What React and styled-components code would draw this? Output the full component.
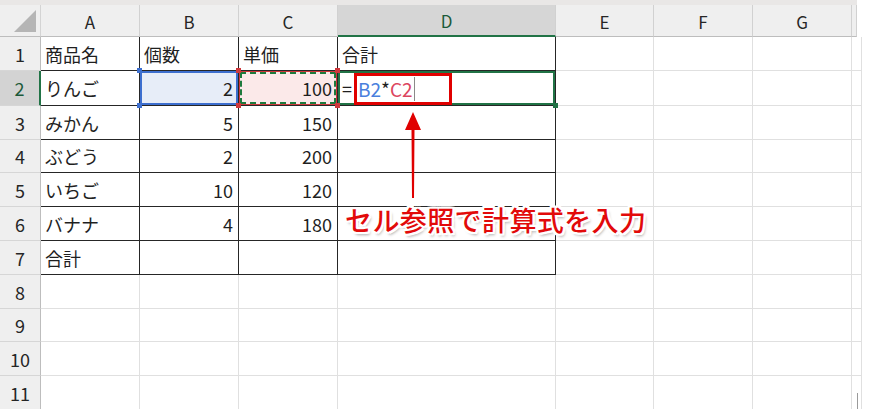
import React from 'react'
import styled, { createGlobalStyle, css } from 'styled-components'

const GlobalStyle = createGlobalStyle`
    html, body {
        margin: 0;
        padding: 0;
        background: #ffffff;
    }
    body {
        font-family: "Noto Sans CJK JP", "Noto Sans", sans-serif;
    }
`

const colWidths = [41, 99, 99, 99, 218, 98, 99, 99, 5]
const rowHeights = [34, 35, 34, 33, 34, 34, 34, 34, 33, 34, 34]
const cols = ['A', 'B', 'C', 'D', 'E', 'F', 'G']

const data = [
    ['商品名', '個数', '単価', '合計'],
    ['りんご', '2', '100', 'formula'],
    ['みかん', '5', '150', ''],
    ['ぶどう', '2', '200', ''],
    ['いちご', '10', '120', ''],
    ['バナナ', '4', '180', ''],
    ['合計', '', '', ''],
]

const Page = styled.div`
    position: relative;
    width: 873px;
    height: 409px;
    overflow: hidden;
`

const Sheet = styled.div`
    display: grid;
    width: 857px;
    grid-template-columns: ${colWidths.map(w => w + 'px').join(' ')};
    grid-template-rows: 5px 32px ${rowHeights.map(h => h + 'px').join(' ')};
    font-size: 18px;
    color: #1f1f1f;
`

const TopStrip = styled.div`
    grid-column: 1 / -1;
    background: #e9e7e6;
`

const Corner = styled.div`
    position: relative;
    background: #efefef;
    border-right: 1px solid #d4d4d4;
    border-bottom: 1px solid #bdbdbd;
    box-sizing: border-box;

    &::after {
        content: '';
        position: absolute;
        right: 4px;
        bottom: 4px;
        width: 0;
        height: 0;
        border-left: 22px solid transparent;
        border-bottom: 22px solid #b5b5b5;
    }
`

const ColHead = styled.div`
    display: flex;
    align-items: center;
    justify-content: center;
    box-sizing: border-box;
    background: ${p => (p.$active ? '#d6d6d6' : '#efefef')};
    color: ${p => (p.$active ? '#1c5a3a' : '#262626')};
    border-right: 1px solid #d1d1d1;
    border-bottom: ${p => (p.$active ? '2px solid #217346' : '1px solid #bdbdbd')};
    font-size: 17px;
    padding-top: 1px;
`

const RowHead = styled.div`
    display: flex;
    align-items: center;
    justify-content: center;
    box-sizing: border-box;
    background: ${p => (p.$active ? '#d3d3d3' : '#efefef')};
    color: ${p => (p.$active ? '#1c5a3a' : '#262626')};
    border-right: ${p => (p.$active ? '2px solid #217346' : '1px solid #bdbdbd')};
    border-bottom: 1px solid #d6d6d6;
    font-size: 18px;
`

const selStyles = {
    blue: css`
        background: #e7edf8;
        box-shadow: inset 0 0 0 2px #3d6fcf;
    `,
    copy: css`
        background: #fbe9e9;
        box-shadow: inset 0 0 0 1px #d0383c;
        &::after {
            content: '';
            position: absolute;
            inset: 1px;
            border: 2px dashed #1d7a3c;
            pointer-events: none;
        }
    `,
    active: css`
        box-shadow: inset 0 0 0 2px #217346;
    `,
}

const Cell = styled.div`
    position: relative;
    display: flex;
    align-items: center;
    justify-content: ${p => (p.$right ? 'flex-end' : 'flex-start')};
    box-sizing: border-box;
    padding: 0 5px 0 4px;
    border-right: 1px solid ${p => (p.$table ? '#262626' : '#e0e0e0')};
    border-bottom: 1px solid ${p => (p.$table ? '#262626' : '#e0e0e0')};
    white-space: nowrap;
    ${p => p.$sel && selStyles[p.$sel]}
`

const Handle = styled.span`
    position: absolute;
    width: 5px;
    height: 5px;
    background: ${p => p.$color};
    ${p => (p.$top ? 'top: -3px;' : 'bottom: -3px;')}
    ${p => (p.$left ? 'left: -3px;' : 'right: -3px;')}
    z-index: 2;
`

const Formula = styled.div`
    display: flex;
    align-items: center;
    margin-left: 0;
`

const Eq = styled.span`
    color: #1f1f1f;
    margin-right: 2px;
`

const RefBox = styled.span`
    display: flex;
    align-items: center;
    box-sizing: border-box;
    width: 98px;
    height: 32px;
    margin-top: 1px;
    padding-left: 1px;
    border: 3px solid #e00000;
    background: #ffffff;
    font-size: 19px;
`

const Ref = styled.span`
    color: ${p => p.$color};
`

const Caret = styled.span`
    display: inline-block;
    width: 1px;
    height: 24px;
    margin-left: 1px;
    background: #8a8a8a;
`

const Arrow = styled.svg`
    position: absolute;
    left: 403px;
    top: 110px;
`

const Callout = styled.div`
    position: absolute;
    left: 345px;
    top: 204px;
    font-size: 27px;
    font-weight: 500;
    line-height: 1.2;
    color: #e20a0a;
    letter-spacing: 0.4px;
    white-space: nowrap;
    text-shadow:
        -2px -2px 0 #fff, 2px -2px 0 #fff, -2px 2px 0 #fff, 2px 2px 0 #fff,
        0 -2px 0 #fff, 0 2px 0 #fff, -2px 0 0 #fff, 2px 0 0 #fff,
        2px 3px 3px rgba(0, 0, 0, 0.35);
`

const ScrollTick = styled.div`
    position: absolute;
    left: 857px;
    top: 393px;
    width: 1px;
    height: 16px;
    background: #9a9a9a;
`

const selFor = (r, c) => {
    if (r === 1 && c === 1) return 'blue'
    if (r === 1 && c === 2) return 'copy'
    if (r === 1 && c === 3) return 'active'
    return undefined
}

const handlesFor = sel => {
    if (sel === 'blue') return '#3d6fcf'
    if (sel === 'copy') return '#d0383c'
    return null
}

const renderContent = (value) => {
    if (value !== 'formula') return value
    return (
        <Formula>
            <Eq>=</Eq>
            <RefBox>
                <Ref $color="#4a80dd">B2</Ref>
                <Ref $color="#1f1f1f">*</Ref>
                <Ref $color="#dc4560">C2</Ref>
                <Caret />
            </RefBox>
        </Formula>
    )
}

const App = () => {
    const rows = Array.from({ length: 11 }, (_, i) => i)

    return (
        <Page>
            <GlobalStyle />
            <Sheet>
                <TopStrip />
                <Corner />
                {cols.map(c => (
                    <ColHead key={c} $active={c === 'D'}>{c}</ColHead>
                ))}
                <ColHead />
                {rows.map(r => (
                    <React.Fragment key={r}>
                        <RowHead $active={r === 1}>{r + 1}</RowHead>
                        {cols.map((c, ci) => {
                            const inTable = r < 7 && ci < 4
                            const value = inTable ? data[r][ci] : ''
                            const sel = selFor(r, ci)
                            const hc = handlesFor(sel)
                            return (
                                <Cell
                                    key={c}
                                    $table={inTable}
                                    $right={r > 0 && (ci === 1 || ci === 2)}
                                    $sel={sel}
                                >
                                    {renderContent(value)}
                                    {hc && (
                                        <>
                                            <Handle $color={hc} $top $left />
                                            <Handle $color={hc} $top />
                                            <Handle $color={hc} $left />
                                            <Handle $color={hc} />
                                        </>
                                    )}
                                    {sel === 'active' && <Handle $color="#217346" />}
                                </Cell>
                            )
                        })}
                        <Cell />
                    </React.Fragment>
                ))}
            </Sheet>
            <Arrow width="20" height="90" viewBox="0 0 20 90">
                <polygon points="10,2 2,20 8.5,20 9,88 11,88 11.5,20 18,20" fill="#e00000" />
            </Arrow>
            <Callout>セル参照で計算式を入力</Callout>
            <ScrollTick />
        </Page>
    )
}

export default App
